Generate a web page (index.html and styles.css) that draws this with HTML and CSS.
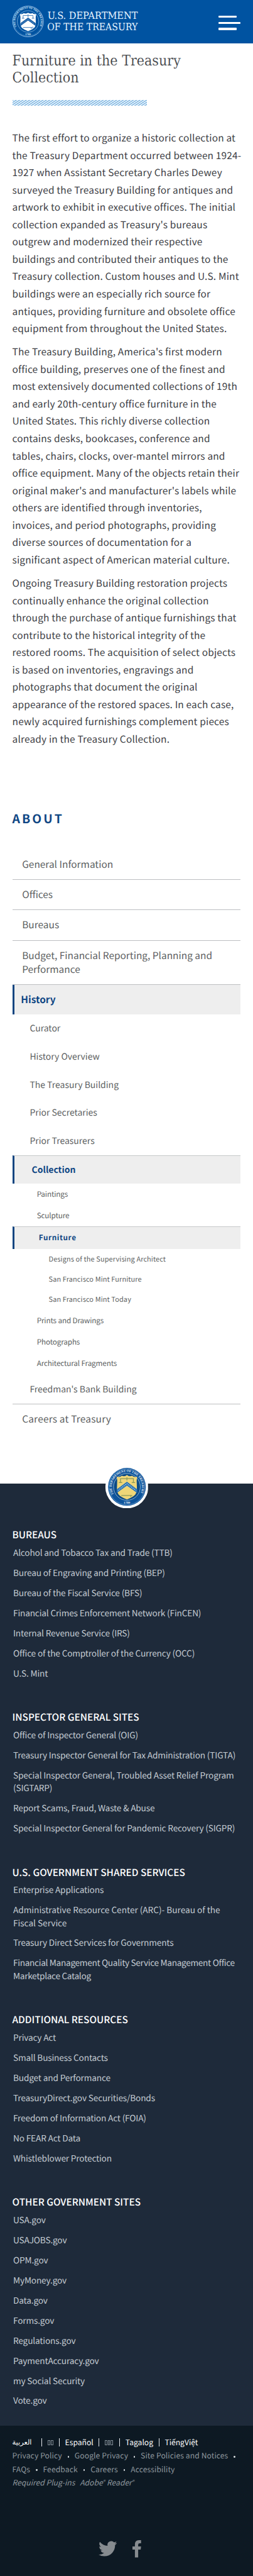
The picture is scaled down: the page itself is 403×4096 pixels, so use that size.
FILE: index.html
```
<!DOCTYPE html>
<html lang="en">
<head>
<meta charset="utf-8">
<title>Furniture in the Treasury Collection</title>
<link rel="stylesheet" href="styles.css">
</head>
<body>
<header class="site-header">
  <svg class="brand" viewBox="0 0 210 54" role="img" aria-label="U.S. Department of the Treasury">
    <defs><path id="ring" d="M7.6 35.500A20.600 20.600 0 1 1 45 34.500"/></defs>
    <circle cx="26.300" cy="26.700" r="25" fill="none" stroke="#9cc4ea" stroke-width="1"/>
    <circle cx="26.300" cy="26.700" r="23.500" fill="none" stroke="#4a8cc9" stroke-width=".7"/>
    <circle cx="26.300" cy="26.700" r="17.500" fill="none" stroke="#8cb9e3" stroke-width=".8"/>
    <text class="ring-text" fill="#d6e9fb"><textPath href="#ring" textLength="85" lengthAdjust="spacingAndGlyphs">THE DEPARTMENT OF THE TREASURY</textPath></text>
    <text class="ring-text" x="26.300" y="49.300" text-anchor="middle" fill="#d6e9fb">1789</text>
    <path d="M13 14.500q4 1 6.500-1.500 3 2 6.800-.4 3.800 2.400 6.800.4 2.500 2.500 6.500 1.500-1.500 5-.8 11 .8 8-2.500 11.500-4 3.500-10 5.500-6-2-10-5.500-3.300-3.500-2.500-11.500.7-6-.8-11z" fill="#fff"/>
    <path d="M14 29.500l12.300-9 12.300 9v4.500l-12.300-9-12.300 9z" fill="#0a55a2"/>
    <path d="M15.500 30.800l10.800-8 10.800 8" fill="none" stroke="#fff" stroke-width=".8" stroke-dasharray="1.200 1.200"/>
    <path d="M18 17h16.600M26.300 15v5M16.200 21.500h4M32.400 21.500h4M18.200 17.500v4M34.400 17.500v4M18 36.500h15M31.500 36.500v2.600M34 35v3" fill="none" stroke="#2a6db2" stroke-width=".9"/>
    <text class="wordmark" x="58" y="22.300" textLength="147" lengthAdjust="spacingAndGlyphs">U.S. DEPARTMENT</text>
    <text class="wordmark" x="57.500" y="41" textLength="147.500" lengthAdjust="spacingAndGlyphs">OF THE TREASURY</text>
  </svg>
  <button class="menu" aria-label="Menu"><span class="bar"></span><span class="bar bar-long"></span><span class="bar"></span></button>
</header>

<main class="content">
  <h1 class="title">Furniture in the Treasury Collection</h1>
  <div class="hatch"></div>
  <article class="prose">
    <p>The first effort to organize a historic collection at<br>the Treasury Department occurred between 1924-<br>1927 when Assistant Secretary Charles Dewey<br>surveyed the Treasury Building for antiques and<br>artwork to exhibit in executive offices. The initial<br>collection expanded as Treasury's bureaus<br>outgrew and modernized their respective<br>buildings and contributed their antiques to the<br>Treasury collection. Custom houses and U.S. Mint<br>buildings were an especially rich source for<br>antiques, providing furniture and obsolete office<br>equipment from throughout the United States.</p>
    <p>The Treasury Building, America's first modern<br>office building, preserves one of the finest and<br>most extensively documented collections of 19th<br>and early 20th-century office furniture in the<br>United States. This richly diverse collection<br>contains desks, bookcases, conference and<br>tables, chairs, clocks, over-mantel mirrors and<br>office equipment. Many of the objects retain their<br>original maker's and manufacturer's labels while<br>others are identified through inventories,<br>invoices, and period photographs, providing<br>diverse sources of documentation for a<br>significant aspect of American material culture.</p>
    <p>Ongoing Treasury Building restoration projects<br>continually enhance the original collection<br>through the purchase of antique furnishings that<br>contribute to the historical integrity of the<br>restored rooms. The acquisition of select objects<br>is based on inventories, engravings and<br>photographs that document the original<br>appearance of the restored spaces. In each case,<br>newly acquired furnishings complement pieces<br>already in the Treasury Collection.</p>
  </article>
</main>

<nav class="side-nav">
  <h2 class="nav-title">ABOUT</h2>
  <ul class="tree">
    <li class="l1">General Information</li>
    <li class="l1">Offices</li>
    <li class="l1">Bureaus</li>
    <li class="l1">Budget, Financial Reporting, Planning and Performance</li>
    <li class="l1 active">History</li>
    <li class="l2">Curator</li>
    <li class="l2">History Overview</li>
    <li class="l2">The Treasury Building</li>
    <li class="l2">Prior Secretaries</li>
    <li class="l2">Prior Treasurers</li>
    <li class="l2 active">Collection</li>
    <li class="l3">Paintings</li>
    <li class="l3">Sculpture</li>
    <li class="l3 active">Furniture</li>
    <li class="l4">Designs of the Supervising Architect</li>
    <li class="l4">San Francisco Mint Furniture</li>
    <li class="l4">San Francisco Mint Today</li>
    <li class="l3">Prints and Drawings</li>
    <li class="l3">Photographs</li>
    <li class="l3">Architectural Fragments</li>
    <li class="l2 branch-end">Freedman's Bank Building</li>
    <li class="l1 last">Careers at Treasury</li>
  </ul>
</nav>

<footer class="footer">
  <svg class="seal" viewBox="0 0 70 70" aria-hidden="true">
    <defs><path id="seal-ring" d="M13.500 47A24.600 24.600 0 1 1 56.500 47"/></defs>
    <circle cx="35" cy="35" r="35" fill="#fff"/>
    <circle cx="35.200" cy="35" r="30.800" fill="#0f559c"/>
    <circle cx="35.200" cy="35" r="29.300" fill="none" stroke="#8fb9dc" stroke-width=".6"/>
    <circle cx="35.200" cy="35" r="21.800" fill="#0b4a86" stroke="#a9c9df" stroke-width=".8"/>
    <text class="seal-text" fill="#e4eef6"><textPath href="#seal-ring" textLength="100" lengthAdjust="spacingAndGlyphs">THE DEPARTMENT OF THE TREASURY</textPath></text>
    <text class="seal-text" x="35.200" y="62.500" text-anchor="middle" fill="#e4eef6">1789</text>
    <path d="M18.500 18.500q5 1.500 8.500-1.500 4 2 8.200-1.500 4.200 3.500 8.200 1.500 3.500 3 8.500 1.500-1.500 6-.6 14 .8 10-2.200 14.500-3.500 4.500-13.900 8.500-10.400-4-13.900-8.500-3-4.500-2.200-14.500.9-8-.6-14z" fill="#efd678"/>
    <path d="M18.500 39l16.700-12.500L52 39v6L35.200 33 18.500 45z" fill="#2b74b5"/>
    <path d="M20.500 40.800l14.700-11 14.800 11" fill="none" stroke="#dcebf2" stroke-width="1.100" stroke-dasharray="1.400 1.600"/>
    <path d="M24 21.500h22.500M35.200 19.500v5M22 28h5.500M43 28h5.500M24.700 22v6M45.700 22v6M26 49h18M41.500 49v2.500" fill="none" stroke="#8a9a5a" stroke-width="1.300"/>
  </svg>
  <div class="link-groups">
    <section>
      <h3>BUREAUS</h3>
      <ul>
        <li>Alcohol and Tobacco Tax and Trade (TTB)</li>
        <li>Bureau of Engraving and Printing (BEP)</li>
        <li>Bureau of the Fiscal Service (BFS)</li>
        <li>Financial Crimes Enforcement Network (FinCEN)</li>
        <li>Internal Revenue Service (IRS)</li>
        <li>Office of the Comptroller of the Currency (OCC)</li>
        <li>U.S. Mint</li>
      </ul>
    </section>
    <section>
      <h3>INSPECTOR GENERAL SITES</h3>
      <ul>
        <li>Office of Inspector General (OIG)</li>
        <li>Treasury Inspector General for Tax Administration (TIGTA)</li>
        <li>Special Inspector General, Troubled Asset Relief Program<br>(SIGTARP)</li>
        <li>Report Scams, Fraud, Waste &amp; Abuse</li>
        <li>Special Inspector General for Pandemic Recovery (SIGPR)</li>
      </ul>
    </section>
    <section>
      <h3>U.S. GOVERNMENT SHARED SERVICES</h3>
      <ul>
        <li>Enterprise Applications</li>
        <li class="loose">Administrative Resource Center (ARC)- Bureau of the<br>Fiscal Service</li>
        <li>Treasury Direct Services for Governments</li>
        <li class="tight">Financial Management Quality Service Management Office<br>Marketplace Catalog</li>
      </ul>
    </section>
    <section>
      <h3>ADDITIONAL RESOURCES</h3>
      <ul>
        <li>Privacy Act</li>
        <li>Small Business Contacts</li>
        <li>Budget and Performance</li>
        <li>TreasuryDirect.gov Securities/Bonds</li>
        <li>Freedom of Information Act (FOIA)</li>
        <li>No FEAR Act Data</li>
        <li>Whistleblower Protection</li>
      </ul>
    </section>
    <section>
      <h3>OTHER GOVERNMENT SITES</h3>
      <ul>
        <li>USA.gov</li>
        <li>USAJOBS.gov</li>
        <li>OPM.gov</li>
        <li>MyMoney.gov</li>
        <li>Data.gov</li>
        <li>Forms.gov</li>
        <li>Regulations.gov</li>
        <li>PaymentAccuracy.gov</li>
        <li>my Social Security</li>
        <li>Vote.gov</li>
      </ul>
    </section>
  </div>
</footer>

<div class="legal">
  <div class="langs">
    <span class="arabic" lang="ar">العربية</span><i class="sep"></i>
    <span class="boxes"><b></b><b></b></span><i class="sep"></i>
    <span>Español</span><i class="sep"></i>
    <span class="boxes"><b></b><b></b><b></b></span><i class="sep"></i>
    <span>Tagalog</span><i class="sep"></i>
    <span>TiếngViệt</span>
  </div>
  <div class="policies"><span>Privacy Policy</span><i class="dot"></i><span>Google Privacy</span><i class="dot"></i><span>Site Policies and Notices</span><i class="dot"></i></div>
  <div class="policies"><span>FAQs</span><i class="dot"></i><span>Feedback</span><i class="dot"></i><span>Careers</span><i class="dot"></i><span>Accessibility</span></div>
  <div class="plugins"><span>Required Plug-ins</span><span>Adobe<small>®</small> Reader<small>®</small></span></div>
  <div class="social">
    <svg class="twitter" viewBox="0 0 24 20" aria-label="Twitter"><path d="M24 2.400a9.800 9.800 0 0 1-2.800.8A4.900 4.900 0 0 0 23.300.5a9.900 9.900 0 0 1-3.100 1.200 4.900 4.900 0 0 0-8.400 4.500A14 14 0 0 1 1.700 1a4.900 4.900 0 0 0 1.500 6.600 4.900 4.900 0 0 1-2.200-.6 4.900 4.900 0 0 0 3.900 4.900 4.900 4.900 0 0 1-2.200.1 4.900 4.900 0 0 0 4.600 3.400A9.900 9.900 0 0 1 0 17.500 13.900 13.900 0 0 0 7.500 19.700c9.100 0 14.300-7.700 14-14.600A10 10 0 0 0 24 2.400z"/></svg>
    <svg class="facebook" viewBox="0 0 14 28" aria-label="Facebook"><path d="M4 28V15.300H0v-5h4V7q0-7 6.500-7H14v5h-2.400Q9.300 5 9.300 7.300v3H14l-.6 5H9.300V28z"/></svg>
  </div>
</div>
</body>
</html>
```
FILE: styles.css
```
/* 1rem is ten layout units */
html { font-size: 9.7778px; }
* { box-sizing: border-box; }
body {
  margin: 0;
  background: #fff;
  color: #3d4045;
  font-family: "Noto Sans CJK SC", "Noto Sans", sans-serif;
  text-rendering: geometricPrecision;
  overflow-x: hidden;
}
h1, h2, h3, p, ul { margin: 0; padding: 0; }
ul { list-style: none; }

.site-header {
  height: 7.1rem;
  padding: 0 2rem 0 1.9rem;
  background: #0053a1;
  display: flex;
  align-items: center;
  justify-content: space-between;
}
.brand { width: 21rem; height: 5.4rem; display: block; overflow: visible; }
.wordmark { font: 16px "DejaVu Serif Condensed", "DejaVu Serif", serif; fill: #e8f4ff; }
.ring-text { font: 700 4.6px "Liberation Serif", serif; }
.menu {
  border: 0; padding: .3rem 0 0; background: none;
  display: flex; flex-direction: column; gap: .67rem;
  width: 3.6rem;
}
.bar { height: .34rem; width: 2.9rem; background: #fff; border-radius: .1rem; }
.bar-long { width: 3.6rem; }

.content { padding: 1.5rem 2rem 0; }
.title {
  font: 2.35rem/2.78rem "DejaVu Serif Condensed", "DejaVu Serif", serif;
  color: #34373b;
  -webkit-text-stroke: .2px #fff;
  width: 30rem;
}
.hatch {
  width: 21.9rem;
  height: .86rem;
  margin-top: 2.12rem;
  background: repeating-linear-gradient(147deg, #7db5e1 0 .8px, #f1f8fd 1.6px 2.4px, #7db5e1 2.9px);
}
.prose {
  margin-top: 3.95rem;
  font-size: 1.58rem;
  line-height: 2.816rem;
  letter-spacing: .018rem;
  white-space: nowrap;
}
.prose p + p { margin-top: 1rem; }

.side-nav { padding: 10rem 2rem 0; }
.nav-title {
  font-size: 1.98rem;
  line-height: 3rem;
  font-weight: 700;
  letter-spacing: .31rem;
  color: #0f4684;
}
.tree { margin-top: 3.5rem; color: #5d5f62; }
.l1 {
  padding: 1.23rem 2rem 1.3rem 1.6rem;
  font-size: 1.58rem;
  line-height: 2.31rem;
  border-bottom: 1px solid #bdbfc1;
}
.l2 { padding-left: 2.85rem; font-size: 1.43rem; line-height: 4.57rem; }
.l3 { padding-left: 4rem; font-size: 1.2rem; line-height: 3.5rem; letter-spacing: -.014rem; }
.l4 { padding-left: 5.93rem; font-size: 1.12rem; line-height: 3.31rem; letter-spacing: .012rem; }
.active {
  background: #eee;
  border-left: .4rem solid #0c4480;
  color: #0f4684;
  font-weight: 700;
}
.l1.active { padding: 1.2rem 0 1.29rem 1.1rem; border-bottom: 0; }
.l2.active { padding-left: 2.87rem; border-top: 1px solid #c6c9ca; line-height: 4.52rem; }
.l3.active { padding-left: 4rem; border-top: 1px solid #c6c9ca; letter-spacing: .063rem; }
.branch-end { padding-top: .16rem; border-bottom: 1px solid #bdbfc1; }
.last { border-bottom: 0; letter-spacing: .02rem; }

.footer {
  position: relative;
  margin-top: 8.12rem;
  padding: 7.16rem 2rem 0;
  height: 153.2rem;
  background: #1e2a3a;
  color: #c4cbd2;
}
.seal {
  position: absolute;
  top: -3rem;
  left: 50%;
  width: 7rem;
  height: 7rem;
  transform: translateX(-50%);
}
.seal-text { font: 700 5.2px "Liberation Serif", serif; }
.link-groups { display: flex; flex-direction: column; gap: 3.84rem; }
.link-groups h3 {
  font-size: 1.57rem;
  line-height: 2.3rem;
  font-weight: 500;
  color: #fff;
  margin-bottom: .62rem;
}
.link-groups li {
  padding: 0 0 1.18rem .15rem;
  font-size: 1.4rem;
  line-height: 2.09rem;
  letter-spacing: -.017rem;
  white-space: nowrap;
}
.link-groups .loose { letter-spacing: -.003rem; }
.link-groups .tight { letter-spacing: -.033rem; }

.legal {
  height: 24.37rem;
  padding: 1.6rem 2rem 0;
  background: #0d1923;
  color: #8e979e;
  font-size: 1.24rem;
  line-height: 2.2rem;
  white-space: nowrap;
}
.langs {
  display: grid;
  grid-template-columns: 4.75rem 1rem 1.9rem .95rem 5.45rem 1rem 2.4rem 1rem 5.4rem 1rem auto;
  align-items: center;
  height: 2.2rem;
  color: #fff;
}
.arabic { font-family: "DejaVu Sans", sans-serif; font-size: 1.16rem; }
.sep { width: 1px; height: 1.3rem; background: #e6eaee; }
.boxes { display: flex; gap: .1rem; }
.boxes b { width: .4rem; height: .85rem; border: 1px solid #7f8a93; }
.policies { display: flex; align-items: center; height: 2.2rem; letter-spacing: .01rem; }
.dot { width: .3rem; height: .3rem; border-radius: 50%; background: #d5dbdf; margin: .2rem .9rem 0; }
.plugins { display: flex; gap: .8rem; height: 2.2rem; font-style: italic; }
.plugins small { font-size: .8rem; line-height: 0; vertical-align: .35rem; }
.social {
  display: flex;
  justify-content: center;
  align-items: center;
  gap: 2.6rem;
  margin-top: 8.2rem;
  padding-right: 2.2rem;
  fill: #868b8f;
}
.twitter { width: 3rem; height: 2.6rem; }
.facebook { width: 1.4rem; height: 2.8rem; }
```
